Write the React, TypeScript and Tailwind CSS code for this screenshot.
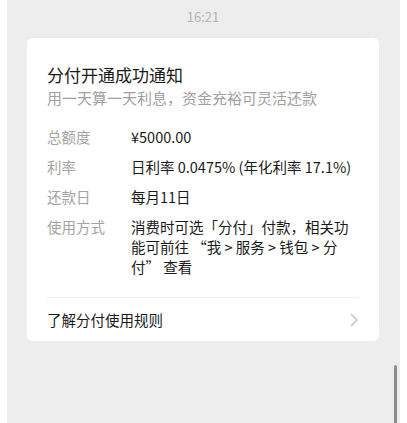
import React from "react";

const font = { fontFamily: '"Noto Sans CJK SC", "Noto Sans", sans-serif' };

function Row({ label, children }: { label: string; children: React.ReactNode }) {
  return (
    <div className="flex text-[14.5px] leading-[20px]">
      <div className="w-[84px] shrink-0 text-[#a3a3a3]">{label}</div>
      <div className="flex-1 text-[#1a1a1a]">{children}</div>
    </div>
  );
}

export default function App() {
  return (
    <div className="w-full h-[423px] bg-white px-[7px] overflow-hidden" style={font}>
      <div className="relative h-full bg-[#ededed] pt-[8px] pl-[20px] pr-[21px]">
        <div className="text-center text-[13px] leading-[18px] text-[#b4b4b4]">16:21</div>
        <div className="mt-[12px] bg-white rounded-[6px] px-[20px] pt-[25px]">
          <div className="text-[17px] leading-[24px] text-[#191919]">分付开通成功通知</div>
          <div className="text-[15px] leading-[22px] text-[#a0a0a0]">用一天算一天利息，资金充裕可灵活还款</div>
          <div className="mt-[18px] flex flex-col gap-[10px]">
            <Row label="总额度">¥5000.00</Row>
            <Row label="利率">日利率 0.0475% (年化利率 17.1%)</Row>
            <Row label="还款日">每月11日</Row>
            <Row label="使用方式">消费时可选「分付」付款，相关功能可前往 “我 &gt; 服务 &gt; 钱包 &gt; 分付” 查看</Row>
          </div>
          <div className="mt-[20px] border-t border-[#ededed] h-[44px] flex items-center justify-between">
            <span className="text-[14.5px] text-[#1a1a1a]">了解分付使用规则</span>
            <svg width="8" height="14" viewBox="0 0 8 14" className="mr-[1px]">
              <path d="M1 1 L7 7 L1 13" fill="none" stroke="#b8b8b8" strokeWidth="1.2" />
            </svg>
          </div>
        </div>
        <div className="absolute left-[387px] top-[365px] w-[3px] h-[70px] rounded-full bg-[#8c8c8c]" />
      </div>
    </div>
  );
}
